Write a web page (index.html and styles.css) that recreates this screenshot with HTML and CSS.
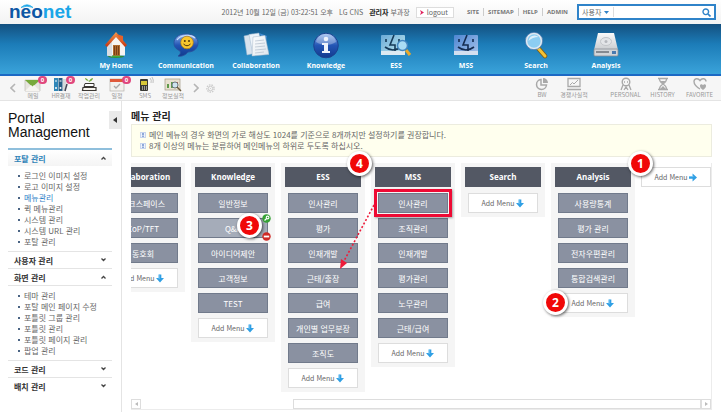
FILE: index.html
```html
<!DOCTYPE html>
<html lang="ko">
<head>
<meta charset="utf-8">
<meta name="viewport" content="width=device-width, initial-scale=1">
<title>neonet</title>
<link rel="stylesheet" href="styles.css">
</head>
<body>
<svg class="defs" aria-hidden="true">
  <defs>
    <linearGradient id="gBlue" x1="0" y1="0" x2="0" y2="1"><stop offset="0" stop-color="#8fb4ee"/><stop offset=".5" stop-color="#2355b4"/><stop offset="1" stop-color="#123a8e"/></linearGradient>
    <linearGradient id="gRoof" x1="0" y1="0" x2="0" y2="1"><stop offset="0" stop-color="#f59a4c"/><stop offset="1" stop-color="#c6330f"/></linearGradient>
    <linearGradient id="gPaper" x1="0" y1="0" x2="1" y2="1"><stop offset="0" stop-color="#fff"/><stop offset="1" stop-color="#dbe4ec"/></linearGradient>
    <linearGradient id="gFaceA" x1="0" y1="0" x2="1" y2="1"><stop offset="0" stop-color="#6aa9d6"/><stop offset="1" stop-color="#c3ecf0"/></linearGradient>
    <linearGradient id="gFaceB" x1="0" y1="0" x2="1" y2="1"><stop offset="0" stop-color="#4d86d2"/><stop offset="1" stop-color="#a9c3ea"/></linearGradient>
    <linearGradient id="gDisk" x1="0" y1="0" x2="0" y2="1"><stop offset="0" stop-color="#fafafa"/><stop offset="1" stop-color="#c9ccd0"/></linearGradient>
    <symbol id="down" viewBox="0 0 9 9"><path d="M3 0h3v4h3L4.500 9 0 4h3z" fill="#2f9fe4"/><path d="M3 0h1v5H3z" fill="#7cc8f4"/></symbol>
    <symbol id="right" viewBox="0 0 9 9"><path d="M0 3v3h4v3l5-4.500L4 0v3z" fill="#2f9fe4"/><path d="M0 3h5v1H0z" fill="#7cc8f4"/></symbol>
    <symbol id="info" viewBox="0 0 6 6"><rect x=".5" y=".5" width="5" height="5" fill="#eef3fc" stroke="#c7d5ee"/><path d="M3 1v2.500M3 4v1" stroke="#2f5fb5"/></symbol>
    <symbol id="chevUp" viewBox="0 0 5 4"><path d="M.5 3.500 2.500 1.500l2 2" fill="none" stroke="#444" stroke-width="1.300"/></symbol>
    <symbol id="chevDown" viewBox="0 0 5 4"><path d="M.5 .5 2.500 2.500l2-2" fill="none" stroke="#444" stroke-width="1.300"/></symbol>
  </defs>
</svg>

<header class="top">
  <a class="logo" href="#"><span>neo</span><b>net</b>
    <svg class="logo-arc" viewBox="0 0 12 4" aria-hidden="true"><path d="M0 3.500Q6-2 12 3.500 6 .8 0 3.500z" fill="#1aa6e8" stroke="#1aa6e8" stroke-width=".7"/></svg>
  </a>
  <div class="user">
    <span class="clock">2012년 10월 12일 (금) 03:22:51 오후</span>
    <span>LG CNS</span>
    <span class="who"><strong>관리자</strong> 부과장</span>
    <button class="logout" type="button"><svg viewBox="0 0 4 5" aria-hidden="true"><path d="M0 0l4 2.500L0 5l1-2.500z" fill="#e0245e"/></svg>logout</button>
  </div>
  <nav class="links">
    <a href="#">SITE</a><a href="#">SITEMAP</a><a href="#">HELP</a><a href="#">ADMIN</a>
  </nav>
  <form class="search">
    <select aria-label="검색 대상"><option>사용자</option></select>
    <svg class="caret" viewBox="0 0 5 3" aria-hidden="true"><path d="M0 0h5L2.500 3z" fill="#2f83c9"/></svg>
    <input type="text" aria-label="검색어">
    <button type="button" aria-label="검색"><svg viewBox="0 0 9 9"><circle cx="3.800" cy="3.800" r="2.800" fill="none" stroke="#2f83c9" stroke-width="1.400"/><path d="M6 6l2.500 2.500" stroke="#2f83c9" stroke-width="1.700"/></svg></button>
  </form>
</header>

<nav class="main-nav">
  <a href="#"><svg viewBox="0 0 26 28" aria-hidden="true"><ellipse cx="13" cy="25.500" rx="8" ry="1.500" fill="#2c8a3a"/><path d="M4 13 13 4l9 9v11.500H4z" fill="#f6f4f2"/><path d="M4 13v11.500l5 1V10z" fill="#d9dde2"/><path d="M13 1 2 14l2 2 9-10 9 10 2-2z" fill="url(#gRoof)"/><path d="M13 3 20 5v6z" fill="#e4612a"/><rect x="10" y="14" width="7" height="11" fill="#b06a2e"/><path d="M11.500 15v9M13.500 15v9M15.500 15v9" stroke="#6b3511" stroke-width=".8"/><path d="M9 25.500h8" stroke="#3fae3f" stroke-width="1.500"/></svg>My Home</a>
  <a href="#"><svg viewBox="0 0 26 28" aria-hidden="true"><path d="M13 3c8 0 12 4 12 9s-4 9-10 9c-2 3-7 5-10 4 2-1 3-3 2-5-4-2-6-4-6-8 0-5 4-9 12-9z" fill="url(#gBlue)" stroke="#2b4f9a" stroke-width=".8"/><path d="M4 9c3-5 14-6 18-2" fill="none" stroke="#c7dcf9" stroke-width="1.400"/><circle cx="14" cy="11.500" r="6.300" fill="#f8c72e" stroke="#b07a12" stroke-width=".7"/><circle cx="11.800" cy="10" r="1" fill="#54380b"/><circle cx="16" cy="10" r="1" fill="#54380b"/><path d="M10.500 13q3.500 3.500 7 0" fill="none" stroke="#54380b"/></svg>Communication</a>
  <a href="#"><svg viewBox="0 0 26 28" aria-hidden="true"><path d="M1 5 10 3l3 19-9 2z" fill="#d8e3ee" stroke="#9fb6cc" stroke-width=".5"/><path d="M6 3.500 16 2l4 20-10 2z" fill="#eef4fa" stroke="#9fb6cc" stroke-width=".5"/><path d="M16 2l8 3-1 6z" fill="#3f8bd4"/><path d="M10 6 22 4.500l4 19L9 25z" fill="url(#gPaper)" stroke="#a8b8c8" stroke-width=".5"/><path d="M12 10l9-1M12 13l10-1M12 16l10-1M12 19l11-1M12 22l9-1" stroke="#b9c4d0" stroke-width=".8"/></svg>Collaboration</a>
  <a href="#"><svg viewBox="0 0 26 28" aria-hidden="true"><circle cx="13" cy="14.500" r="12.300" fill="url(#gBlue)" stroke="#1c438f"/><path d="M3 11c2-11 18-11 20 0-6 4-14 4-20 0z" fill="#fff" opacity=".3"/><circle cx="13" cy="8" r="2.300" fill="#eef3fb"/><path d="M9 12h6v8h2v2H9v-2h2v-6H9z" fill="#eef3fb"/></svg>Knowledge</a>
  <a href="#"><svg class="wide" viewBox="0 0 32 28" aria-hidden="true"><rect x="1" y="4" width="24" height="20" rx="1" fill="url(#gFaceA)"/><path d="M1 20h24v4H1z" fill="#dceaf2"/><path d="M14 4 10 14h5v6" fill="none" stroke="#163a58" stroke-width="1.600"/><path d="M6 8v3M19 8v3M5 16q8 6 16 0" fill="none" stroke="#163a58" stroke-width="1.600"/><path d="M26 19l4 5" stroke="#e8a92c" stroke-width="3"/><circle cx="22.500" cy="14.500" r="5" fill="#a9dcf4" stroke="#4386c0" stroke-width="1.500"/></svg>ESS</a>
  <a href="#"><svg viewBox="0 0 26 28" aria-hidden="true"><rect x="1" y="4" width="24" height="20" rx="1" fill="url(#gFaceB)"/><path d="M1 20h24v4H1z" fill="#d3dff0"/><path d="M14 4 10 14h5v6" fill="none" stroke="#152c50" stroke-width="1.600"/><path d="M6 8v3M20 8v3M5 16q8 6 16 0" fill="none" stroke="#152c50" stroke-width="1.600"/></svg>MSS</a>
  <a href="#"><svg viewBox="0 0 26 28" aria-hidden="true"><path d="M15 17l7 8" stroke="#7e5b12" stroke-width="4.600" stroke-linecap="round"/><path d="M15 17l7 8" stroke="#f3c234" stroke-width="3" stroke-linecap="round"/><circle cx="11" cy="10" r="7.700" fill="#8ccdf2" stroke="#dfe9f2" stroke-width="2"/><circle cx="11" cy="10" r="8.700" fill="none" stroke="#3b6fa8" stroke-width=".7"/><path d="M5.500 10a6 6 0 0 1 10-4q-6 0-10 4z" fill="#fff" opacity=".7"/></svg>Search</a>
  <a href="#"><svg viewBox="0 0 26 28" aria-hidden="true"><path d="M5 2h16l4 17H1z" fill="url(#gDisk)"/><ellipse cx="13" cy="10.500" rx="5.500" ry="4" fill="#e3e5e8" stroke="#c2c5c9"/><circle cx="13" cy="10.500" r="1.500" fill="#b5b8bd"/><rect x="1" y="18" width="24" height="7" rx="1" fill="#d2d5d9" stroke="#888d94" stroke-width=".8"/><path d="M3 21h13" stroke="#6b7078" stroke-width="1.500"/><rect x="19" y="20" width="4" height="3" fill="#4a7ab0"/></svg>Analysis</a>
</nav>

<div class="toolbar">
  <button class="step" type="button" aria-label="이전"><svg viewBox="0 0 6 10"><path d="M5 1 1 5l4 4" fill="none" stroke="#b5b5b5" stroke-width="1.600"/></svg></button>
  <ul class="quick">
    <li><a href="#"><svg viewBox="0 0 18 15" aria-hidden="true"><path d="M1 3h15v11H1z" fill="#e7e4df" stroke="#b9b6b0" stroke-width=".6"/><path d="M1 3h15L8.500 10z" fill="#77a93b"/><path d="M1 14l6-6 1.500 1.500L10 8l6 6z" fill="#f6f4f0"/></svg><em>0</em>메일</a></li>
    <li><a href="#"><svg viewBox="0 0 18 15" aria-hidden="true"><rect x="2" y="1" width="4" height="13" fill="#2f86b8"/><rect x="6.500" y="1" width="4" height="13" fill="#285e86"/><rect x="11" y="2" width="3" height="12" fill="#d5d9dc"/><path d="M3 4h2M7.500 4h2" stroke="#fff"/><circle cx="4" cy="11" r="1" fill="#fff"/><circle cx="8.500" cy="11" r="1" fill="#fff"/><path d="M13 14l2-7" stroke="#445" stroke-width="1.500"/></svg><em>0</em>HR결재</a></li>
    <li><a href="#"><svg viewBox="0 0 18 15" aria-hidden="true"><path d="M9 5C8 2 6 1 5 1c0 2 2 3 4 3 1-2 3-3 4-3 0 2-2 3-4 4z" fill="#74a83a"/><path d="M5 6.500h9v3H4z" fill="#fff" stroke="#3b3733"/><path d="M3 10.500h13v3H2.500z" fill="#f7f4ee" stroke="#3b3733" stroke-width="1.200"/></svg>작업관리</a></li>
    <li><a href="#"><svg viewBox="0 0 18 15" aria-hidden="true"><rect x="2" y="2" width="14" height="12" fill="#f3f1ee" stroke="#b5b2ad" stroke-width=".7"/><rect x="2" y="2" width="14" height="3" fill="#e05a3a"/><path d="M6 9l2 2 4-4" fill="none" stroke="#a8a8a8" stroke-width="1.300"/></svg><em>0</em>일정</a></li>
    <li><a href="#"><svg viewBox="0 0 18 15" aria-hidden="true"><rect x="4" y="2" width="8" height="12" rx="1" fill="#3a3a35"/><rect x="5" y="4" width="6" height="4" fill="#d8c83a"/><path d="M6 10h1M8 10h1M10 10h1M6 12h1M8 12h1M10 12h1" stroke="#fff"/><path d="M14 1q2 2 1 5M16 0q2 3 1 6" fill="none" stroke="#aaa" stroke-width=".7"/></svg>SMS</a></li>
    <li><a href="#"><svg viewBox="0 0 18 15" aria-hidden="true"><rect x="1" y="2" width="15" height="11" fill="#e8e0cf" stroke="#a39a86" stroke-width=".7"/><path d="M3 11V7h2v4M7 11V5h2v6" fill="#5f9a4a"/><path d="M10 9l4-4" stroke="#c6543a"/><circle cx="11" cy="8" r="3" fill="#cfe4ee" stroke="#6c7780"/><path d="M13 10l4 4" stroke="#6c5a3a" stroke-width="1.500"/></svg>정보실적</a></li>
  </ul>
  <button class="step" type="button" aria-label="다음"><svg viewBox="0 0 6 10"><path d="M1 1l4 4-4 4" fill="none" stroke="#b5b5b5" stroke-width="1.600"/></svg></button>
  <button class="gear" type="button" aria-label="설정"><svg viewBox="0 0 9 9"><circle cx="4.500" cy="4.500" r="3.600" fill="none" stroke="#ccc" stroke-width="1.400" stroke-dasharray="1.500 1"/><circle cx="4.500" cy="4.500" r="2.200" fill="none" stroke="#ccc"/><circle cx="4.500" cy="4.500" r=".6" fill="#ccc"/></svg></button>
  <ul class="tools">
    <li><a href="#"><svg viewBox="0 0 14 14"><path d="M6 2.500a5 5 0 1 0 5.500 5.500H6z" fill="none" stroke="#a9a9a9" stroke-width="1.500"/><path d="M8 1a5 5 0 0 1 5 5H8z" fill="#a9a9a9"/></svg>BW</a></li>
    <li><a href="#"><svg viewBox="0 0 14 14"><path d="M1 1.500h12v8H1zM0 12.500h14" fill="none" stroke="#a9a9a9" stroke-width="1.300"/><path d="M3 8l2.500-2.500L7 7l4-4" fill="none" stroke="#a9a9a9"/></svg>경쟁사실적</a></li>
  </ul>
  <ul class="tools mine">
    <li><a href="#"><svg viewBox="0 0 14 14"><circle cx="7" cy="5" r="3.800" fill="none" stroke="#a9a9a9" stroke-width="1.400"/><path d="M5 5h1M8 5h1M4 8l-2 5M10 8l2 5M5 13l2-3 2 3" fill="none" stroke="#a9a9a9" stroke-width="1.300"/></svg>PERSONAL</a></li>
    <li><a href="#"><svg viewBox="0 0 14 14"><path d="M2 1.500h10M2 12.500h10" stroke="#a9a9a9" stroke-width="1.600"/><path d="M3.500 2c0 3 2 4 3.500 5-1.500 1-3.500 2-3.500 5M10.500 2c0 3-2 4-3.500 5 1.500 1 3.500 2 3.500 5" fill="none" stroke="#a9a9a9" stroke-width="1.200"/><path d="M4.500 4h5L7 7zM4 12l3-3 3 3z" fill="#a9a9a9"/></svg>HISTORY</a></li>
    <li><a href="#"><svg viewBox="0 0 14 14"><path d="M7 12C3 9.500 1 7.500 1 4.500 1 1.500 5 .5 7 3.500 9 .5 13 1.500 13 4.500" fill="none" stroke="#a9a9a9" stroke-width="1.400"/><path d="M10 13C7.500 11.500 7 10 7 8.800c0-1.800 2.200-2 3-.5.800-1.500 3-1.300 3 .5 0 1.200-.5 2.700-3 4.200z" fill="#a9a9a9"/></svg>FAVORITE</a></li>
  </ul>
</div>

<div class="body">
  <aside class="side">
    <div class="side-top">
      <h1>Portal<br>Management</h1>
      <button type="button" aria-label="접기"><svg viewBox="0 0 4 6"><path d="M4 0v6L0 3z" fill="#333"/></svg></button>
    </div>
    <section class="group first">
      <h2><a href="#">포탈 관리</a><svg><use href="#chevUp"/></svg></h2>
      <ul>
        <li><a href="#">로그인 이미지 설정</a></li><li><a href="#">로고 이미지 설정</a></li><li><a class="on" href="#">메뉴관리</a></li><li><a href="#">퀵 메뉴관리</a></li><li><a href="#">시스템 관리</a></li><li><a href="#">시스템 URL 관리</a></li><li><a href="#">포탈 관리</a></li>
      </ul>
    </section>
    <section class="group"><h2><a href="#">사용자 관리</a><svg><use href="#chevDown"/></svg></h2></section>
    <section class="group open">
      <h2><a href="#">화면 관리</a><svg><use href="#chevUp"/></svg></h2>
      <ul>
        <li><a href="#">테마 관리</a></li><li><a href="#">포탈 메인 페이지 수정</a></li><li><a href="#">포틀릿 그룹 관리</a></li><li><a href="#">포틀릿 관리</a></li><li><a href="#">포틀릿 페이지 관리</a></li><li><a href="#">팝업 관리</a></li>
      </ul>
    </section>
    <section class="group"><h2><a href="#">코드 관리</a><svg><use href="#chevDown"/></svg></h2></section>
    <section class="group"><h2><a href="#">배치 관리</a><svg><use href="#chevDown"/></svg></h2></section>
  </aside>

  <main class="content">
    <h2 class="title">메뉴 관리</h2>
    <ul class="notice">
      <li><svg><use href="#info"/></svg>메인 메뉴의 경우 화면의 가로 해상도 1024를 기준으로 8개까지만 설정하기를 권장합니다.</li>
      <li><svg><use href="#info"/></svg>8개 이상의 메뉴는 분류하여 메인메뉴의 하위로 두도록 하십시오.</li>
    </ul>
    <div class="board">
      <div class="columns">
        <section class="col">
          <h3>Collaboration</h3>
          <button class="item" type="button">워크스페이스</button>
          <button class="item" type="button">CoP/TFT</button>
          <button class="item" type="button">동호회</button>
          <button class="add" type="button">Add Menu<svg><use href="#down"/></svg></button>
        </section>
        <section class="col">
          <h3>Knowledge</h3>
          <button class="item" type="button">일반정보</button>
          <div class="slot">
            <button class="item hover" type="button">Q&amp;A</button>
            <svg class="edit" viewBox="0 0 10 10" aria-hidden="true"><circle cx="5" cy="5" r="4.700" fill="#35a235"/><path d="M2.800 7.300 5.500 4.600" stroke="#fff" stroke-width="1.500"/><circle cx="6.200" cy="3.900" r="1.500" fill="none" stroke="#fff" stroke-width="1.200"/></svg>
            <svg class="remove" viewBox="0 0 10 10" aria-hidden="true"><circle cx="5" cy="5" r="4.700" fill="#d02a26"/><path d="M2 5h6" stroke="#fff" stroke-width="2"/></svg>
            <span class="pin pin-item">3</span>
          </div>
          <button class="item" type="button">아이디어제안</button>
          <button class="item" type="button">고객정보</button>
          <button class="item" type="button">TEST</button>
          <button class="add" type="button">Add Menu<svg><use href="#down"/></svg></button>
        </section>
        <section class="col">
          <h3>ESS</h3>
          <button class="item" type="button">인사관리</button>
          <button class="item" type="button">평가</button>
          <button class="item" type="button">인재개발</button>
          <button class="item" type="button">근태/출장</button>
          <button class="item" type="button">급여</button>
          <button class="item" type="button">개인별 업무분장</button>
          <button class="item" type="button">조직도</button>
          <button class="add" type="button">Add Menu<svg><use href="#down"/></svg></button>
          <span class="pin pin-corner">4</span>
        </section>
        <section class="col">
          <h3>MSS</h3>
          <div class="slot picked">
            <button class="item" type="button">인사관리</button>
            <svg class="drag" viewBox="0 0 38 68" aria-hidden="true"><path d="M36 2 6 58" stroke="#ee1c3a" stroke-width="1.600" stroke-dasharray="2 2"/><path d="M2 66l1-10 6 4z" fill="#ee1c3a"/></svg>
          </div>
          <button class="item" type="button">조직관리</button>
          <button class="item" type="button">인재개발</button>
          <button class="item" type="button">평가관리</button>
          <button class="item" type="button">노무관리</button>
          <button class="item" type="button">근태/급여</button>
          <button class="add" type="button">Add Menu<svg><use href="#down"/></svg></button>
        </section>
        <section class="col">
          <h3>Search</h3>
          <button class="add" type="button">Add Menu<svg><use href="#down"/></svg></button>
        </section>
        <section class="col">
          <h3>Analysis</h3>
          <button class="item" type="button">사용량통계</button>
          <button class="item" type="button">평가 관리</button>
          <button class="item" type="button">전자우편관리</button>
          <button class="item" type="button">통합검색관리</button>
          <div class="slot">
            <button class="add" type="button">Add Menu<svg><use href="#down"/></svg></button>
            <span class="pin pin-left">2</span>
          </div>
        </section>
        <div class="new-col">
          <button class="add" type="button">Add Menu<svg><use href="#right"/></svg></button>
          <span class="pin pin-new">1</span>
        </div>
      </div>
      <div class="scrollbar">
        <button type="button" aria-label="왼쪽"><svg viewBox="0 0 3 4"><path d="M3 0v4L0 2z" fill="#bbb"/></svg></button>
        <span class="rail"></span><span class="thumb"></span>
        <button type="button" aria-label="오른쪽"><svg viewBox="0 0 3 4"><path d="M0 0v4l3-2z" fill="#bbb"/></svg></button>
      </div>
    </div>
  </main>
</div>
</body>
</html>
```
FILE: styles.css
```css
* { box-sizing: border-box; margin: 0; padding: 0; }
body {
  min-height: 100vh;
  display: flex;
  flex-direction: column;
  background: #fff;
  color: #666;
  font: 8px/11px "Noto Sans CJK KR", sans-serif;
}
ul { list-style: none; }
a { color: inherit; text-decoration: none; }
button, input, select { font: inherit; color: inherit; border: 0; background: none; }
button { cursor: pointer; }
svg { display: block; flex: none; }
.defs { position: absolute; width: 0; height: 0; }

/* Top bar */
.top {
  display: flex;
  align-items: center;
  height: 24px;
  padding: 0 5px 0 9px;
  background: linear-gradient(#fff, #f3f3f3);
}
.logo { position: relative; font: bold 19px/24px "Liberation Sans", sans-serif; color: #0d57a5; }
.logo b { color: #1aa6e8; }
.logo-arc { position: absolute; left: 12px; top: 4px; width: 12px; height: 4px; }
.user { display: flex; align-items: center; gap: 6px; margin-left: auto; white-space: nowrap; font-size: 7px; }
.user strong { color: #222; }
.logout {
  display: flex;
  align-items: center;
  gap: 3px;
  height: 11px;
  padding: 0 5px 0 3px;
  border: 1px solid #ddd;
  background: #fff;
  line-height: 9px;
}
.logout svg { width: 4px; height: 5px; }
.links { display: flex; margin: 0 5px 0 9px; font: bold 6px/8px "Open Sans", sans-serif; color: #777; }
.links a { padding: 0 4px; }
.links a + a { border-left: 1px solid #ccc; }
.search {
  display: flex;
  align-items: center;
  width: 139px;
  height: 16px;
  border: 2px solid #2f83c9;
  background: #fff;
  padding: 0 3px;
  font-size: 7px;
}
.search select { appearance: none; width: 22px; height: 12px; line-height: 12px; }
.caret { width: 5px; height: 3px; }
.search input { flex: 1; min-width: 0; height: 10px; margin-left: 4px; border-left: 1px solid #ddd; }
.search button svg { width: 9px; height: 9px; }

/* Main navigation */
.main-nav {
  display: flex;
  height: 52px;
  padding: 7px 0 0 81px;
  border-bottom: 2px solid #1c69c4;
  background: linear-gradient(#14507f, #1c7cb8 40%, #3aa3da);
}
.main-nav a {
  width: 70px;
  display: flex;
  flex-direction: column;
  align-items: center;
  gap: 1px;
  font: bold 7px/12px "Open Sans", sans-serif;
  color: #fff;
}
.main-nav svg { width: 26px; height: 28px; }
.main-nav .wide { width: 32px; }

/* Shortcut toolbar */
.toolbar {
  display: flex;
  align-items: center;
  height: 25px;
  padding: 0 3px 0 10px;
  border-bottom: 1px solid #e4e4e4;
  background: #f6f6f6;
  font-size: 6px;
  line-height: 8px;
  color: #999;
}
.step svg { width: 6px; height: 10px; }
.quick { display: flex; margin: 0 6px 0 3px; }
.quick a, .tools a {
  position: relative;
  display: flex;
  flex-direction: column;
  align-items: center;
  white-space: nowrap;
}
.quick li { width: 28px; }
.quick svg { width: 18px; height: 15px; }
.quick em {
  position: absolute;
  right: 0;
  top: -1px;
  width: 9px;
  height: 8px;
  border-radius: 4px;
  background: #e0487e;
  color: #fff;
  font: bold 6px/8px "Open Sans", sans-serif;
  text-align: center;
}
.gear { margin-left: 7px; }
.gear svg { width: 9px; height: 9px; }
.tools { display: flex; margin-left: auto; }
.tools li { width: 32px; }
.tools svg { width: 14px; height: 14px; }
.tools.mine { margin-left: 17px; }
.mine li { width: 37px; }

/* Page body */
.body { display: flex; flex: 1; }
.side { width: 122px; border-right: 1px solid #e4e4e4; padding: 10px 0 0 8px; }
.side-top { display: flex; justify-content: space-between; height: 37px; }
.side-top h1 { font: 14px/14px "Liberation Sans", sans-serif; color: #111; }
.side-top button { display: flex; align-items: center; justify-content: center; width: 12px; height: 18px; background: #eaeaea; }
.side-top button svg { width: 4px; height: 6px; }
.group { margin-right: 9px; border-top: 1px solid #e4e4e4; }
.group h2 {
  display: flex;
  align-items: center;
  justify-content: space-between;
  height: 16px;
  padding: 0 6px;
  font-size: 8px;
  color: #333;
}
.group h2 svg { width: 5px; height: 4px; }
.first { border-top: 2px solid #8fbfdc; }
.first h2 { color: #2f83b8; background: linear-gradient(#fff, #f4f4f4); }
.group ul { padding: 4px 0 4px 10px; }
.open ul { border-top: 1px solid #e4e4e4; }
.group li { display: flex; align-items: center; gap: 4px; height: 11px; white-space: nowrap; }
.group li::before { content: ""; width: 2px; height: 2px; background: #4a6484; }
.group .on { color: #2f7fc8; }

.content { flex: 1; min-width: 0; padding: 8px 9px 2px; }
.title { height: 15px; font-size: 10px; line-height: 14px; color: #222; }
.notice { padding: 4px 8px 5px; border: 1px solid #ececdf; background: #ffffee; }
.notice li { display: flex; align-items: center; gap: 3px; }
.notice svg { width: 6px; height: 6px; }

/* Menu board */
.board { margin-top: 6px; border: solid #ececec; border-width: 0 1px 1px 0; }
.columns { display: flex; justify-content: flex-end; align-items: flex-start; gap: 6px; overflow-x: clip; padding-bottom: 7px; }
.col { position: relative; flex: none; display: flex; flex-direction: column; gap: 5px; width: 84px; padding: 4px; background: #f5f5f5; }
.col h3 {
  height: 20px;
  margin-bottom: 1px;
  background: #535864;
  color: #fff;
  font: bold 8px/20px "Open Sans", sans-serif;
  text-align: center;
}
.col .item, .col .add { margin: 0 3px; }
.item { height: 20px; border: 1px solid #717a8b; background: #8a91a1; color: #fff; }
.hover { background: #a5acb9; }
.add { display: flex; align-items: center; justify-content: center; gap: 2px; height: 20px; border: 1px solid #ddd; background: #fff; font-size: 7px; }
.add svg { width: 8px; height: 9px; }
.slot { position: relative; display: flex; }
.slot button { flex: 1; }
.new-col { position: relative; flex: none; padding-top: 4px; }
.new-col .add { width: 70px; }

.picked::after {
  content: "";
  position: absolute;
  inset: -4px -1px;
  border: 3px solid #ee0a34;
  box-shadow: 1px 1px 2px #0005;
}
.drag { position: absolute; right: 75px; top: 10px; width: 38px; height: 68px; z-index: 1; }
.edit, .remove { position: absolute; right: 0; width: 9px; height: 9px; }
.edit { top: -4px; }
.remove { bottom: -3px; }

.pin {
  position: absolute;
  z-index: 2;
  width: 25px;
  height: 25px;
  border: 3px solid #fff;
  border-radius: 50%;
  background: #f00808;
  box-shadow: 1px 1px 3px #0009;
  color: #fff;
  font: bold 12px/19px "Open Sans", sans-serif;
  text-align: center;
}
.pin-item { left: 42px; top: -5px; }
.pin-corner { right: -7px; top: -12px; }
.pin-left { left: -12px; top: -3px; }
.pin-new { left: -13px; top: -12px; }

.scrollbar { display: flex; height: 10px; }
.scrollbar button { display: flex; align-items: center; justify-content: center; width: 10px; border: 1px solid #ddd; }
.scrollbar svg { width: 3px; height: 4px; }
.rail { flex: 3; }
.thumb { flex: 8; border: 1px solid #ddd; }
```
